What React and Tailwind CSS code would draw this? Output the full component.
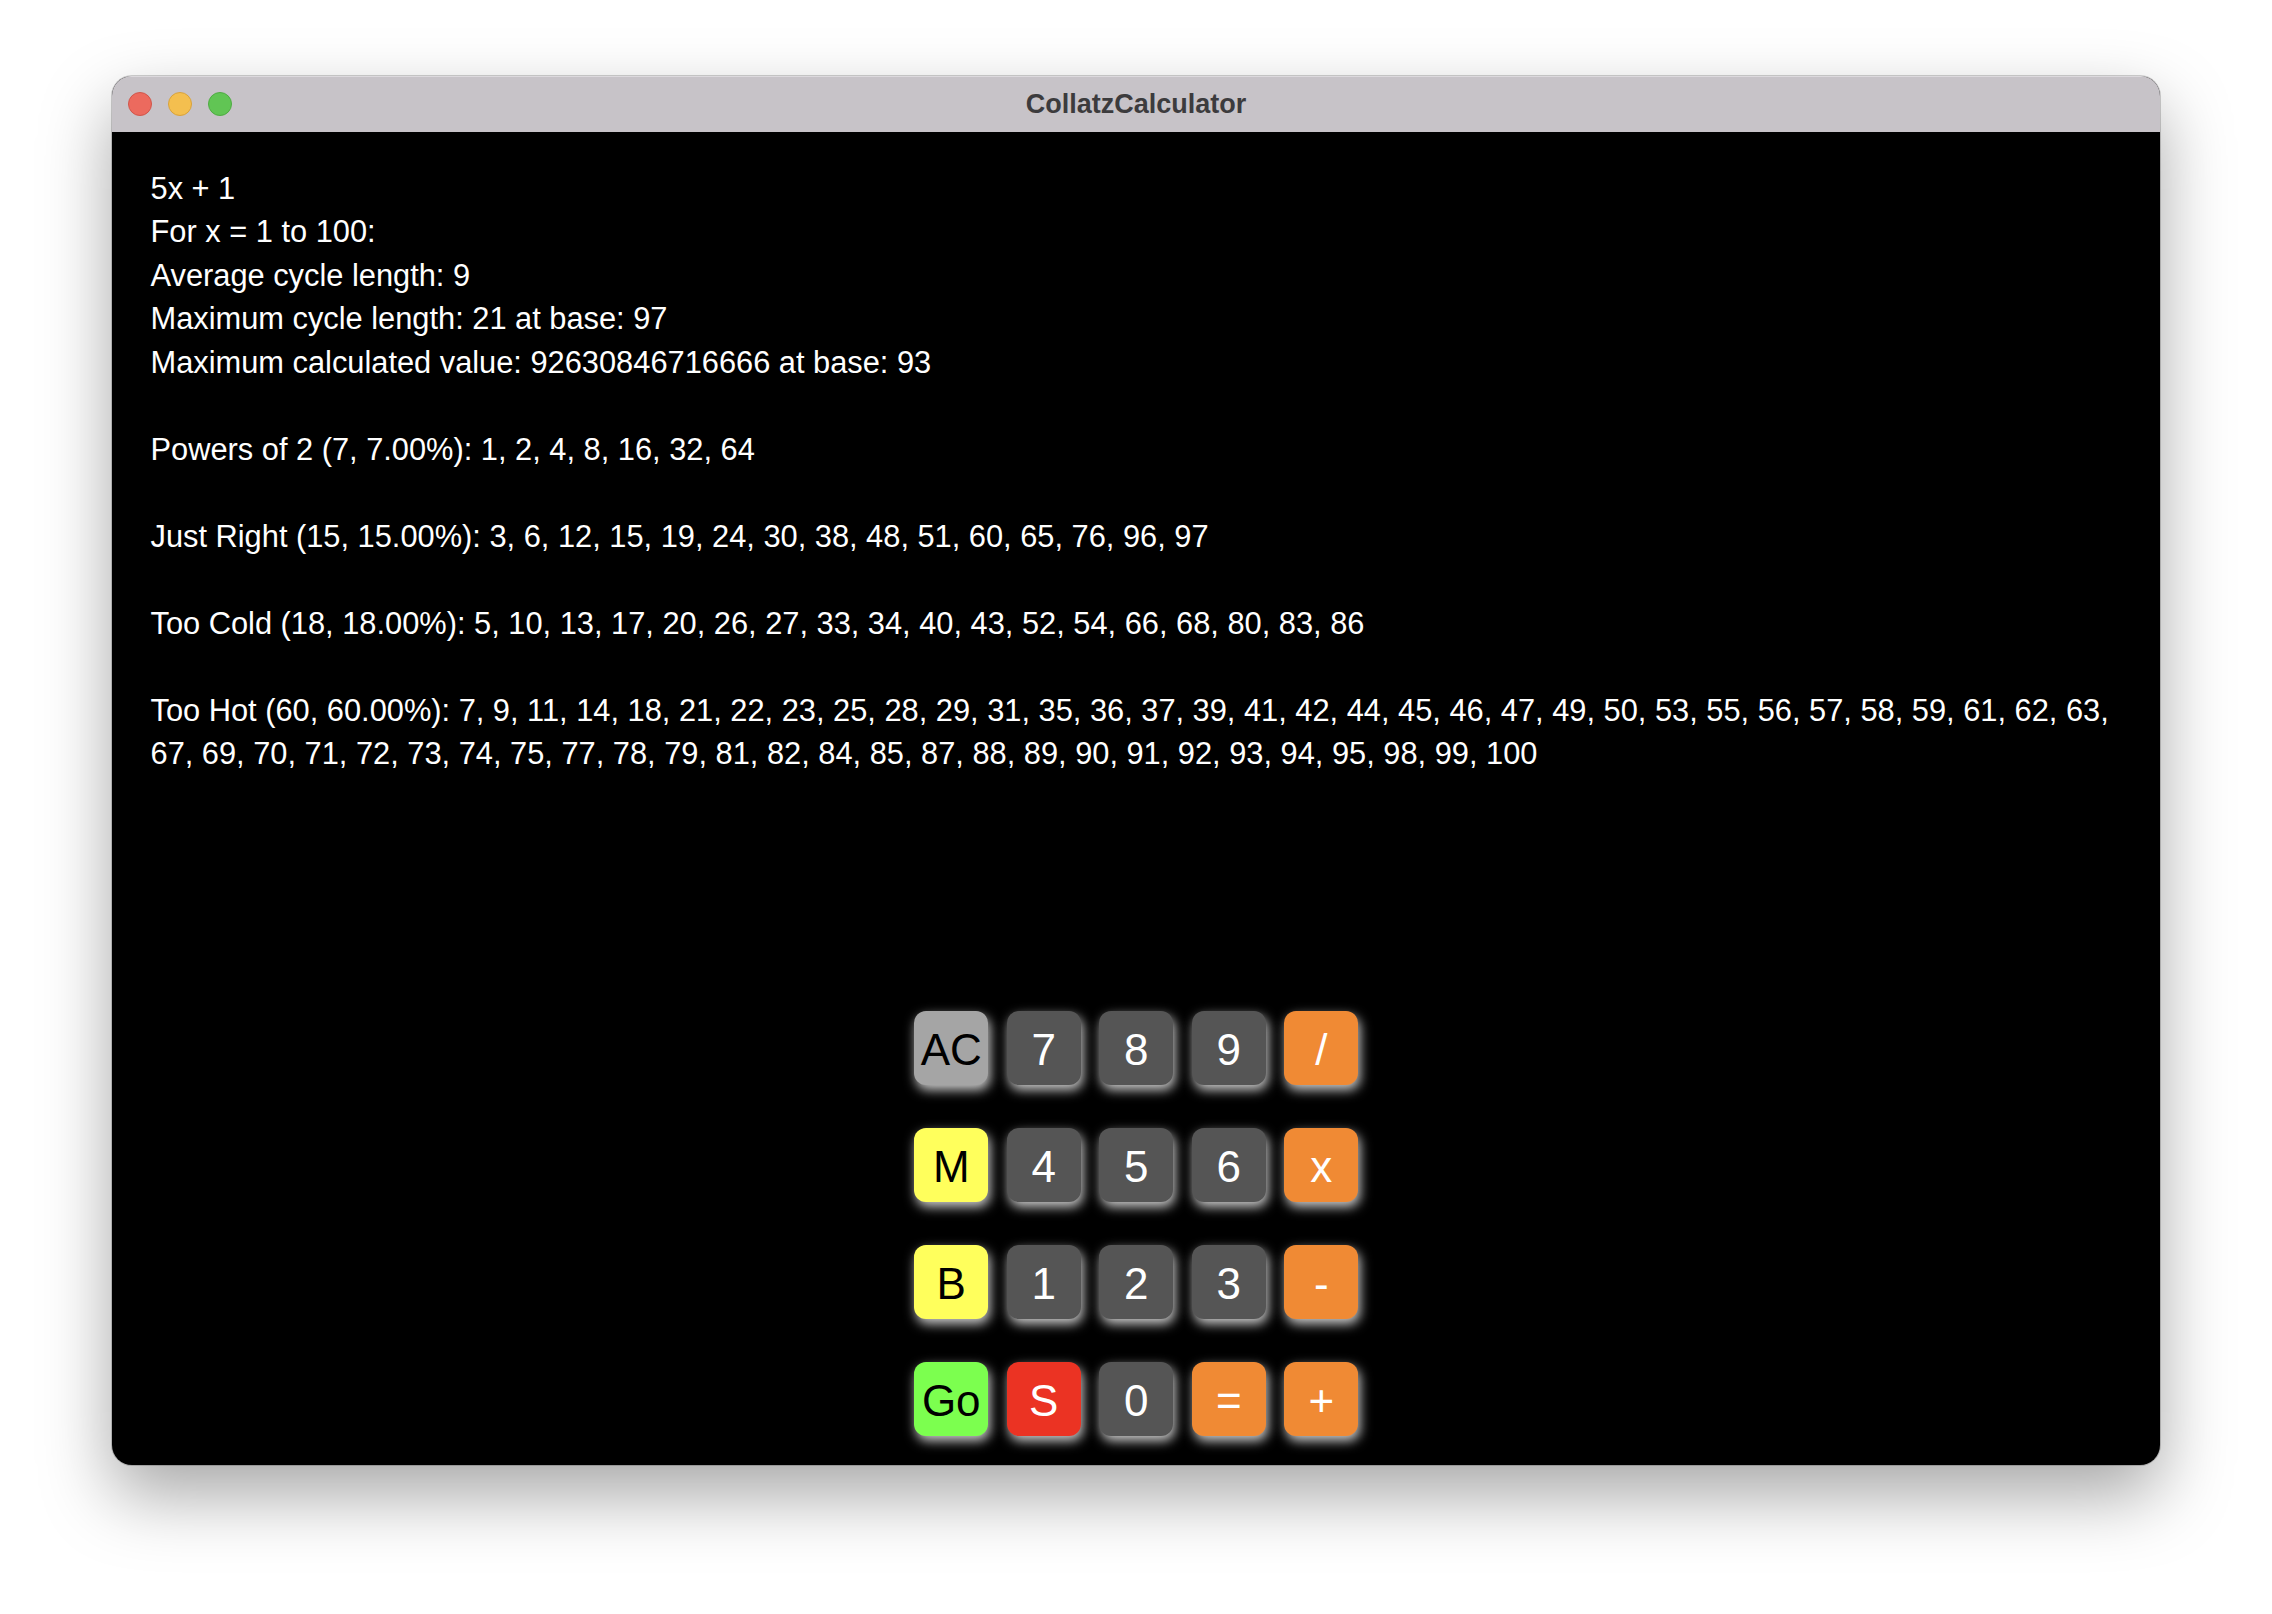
import React from "react";

const lines = [
  "5x + 1",
  "For x = 1 to 100:",
  "Average cycle length: 9",
  "Maximum cycle length: 21 at base: 97",
  "Maximum calculated value: 92630846716666 at base: 93",
  "",
  "Powers of 2 (7, 7.00%): 1, 2, 4, 8, 16, 32, 64",
  "",
  "Just Right (15, 15.00%): 3, 6, 12, 15, 19, 24, 30, 38, 48, 51, 60, 65, 76, 96, 97",
  "",
  "Too Cold (18, 18.00%): 5, 10, 13, 17, 20, 26, 27, 33, 34, 40, 43, 52, 54, 66, 68, 80, 83, 86",
  "",
  "Too Hot (60, 60.00%): 7, 9, 11, 14, 18, 21, 22, 23, 25, 28, 29, 31, 35, 36, 37, 39, 41, 42, 44, 45, 46, 47, 49, 50, 53, 55, 56, 57, 58, 59, 61, 62, 63, 67, 69, 70, 71, 72, 73, 74, 75, 77, 78, 79, 81, 82, 84, 85, 87, 88, 89, 90, 91, 92, 93, 94, 95, 98, 99, 100",
];

const gray = "bg-[#555555] text-white";
const orange = "bg-[#f08a34] text-white";

const keys = [
  { label: "AC", cls: "bg-[#a5a5a5] text-black" },
  { label: "7", cls: gray },
  { label: "8", cls: gray },
  { label: "9", cls: gray },
  { label: "/", cls: orange },
  { label: "M", cls: "bg-[#ffff5c] text-black" },
  { label: "4", cls: gray },
  { label: "5", cls: gray },
  { label: "6", cls: gray },
  { label: "x", cls: orange },
  { label: "B", cls: "bg-[#ffff5c] text-black" },
  { label: "1", cls: gray },
  { label: "2", cls: gray },
  { label: "3", cls: gray },
  { label: "-", cls: orange },
  { label: "Go", cls: "bg-[#7cff4f] text-black" },
  { label: "S", cls: "bg-[#eb3323] text-white" },
  { label: "0", cls: gray },
  { label: "=", cls: orange },
  { label: "+", cls: orange },
];

function Key({ label, cls }) {
  return (
    <button
      className={`w-[74px] h-[74px] rounded-[12px] flex items-center justify-center pt-[3px] text-[44px] leading-none shadow-[2px_5px_12px_rgba(255,255,255,0.8)] ${cls}`}
    >
      {label}
    </button>
  );
}

export default function App() {
  return (
    <div
      className="w-[2272px] h-[1614px] bg-white pt-[76px]"
      style={{ fontFamily: '"Liberation Sans", Arial, sans-serif' }}
    >
      <div className="mx-auto w-[2048px] h-[1389px] rounded-[20px] overflow-hidden flex flex-col bg-black shadow-[0_30px_70px_rgba(0,0,0,0.35),0_0_0_1px_rgba(0,0,0,0.18)]">
        <div className="relative h-[56px] shrink-0 bg-[#c7c3c8] border-t border-[#dcd9dd] flex items-center justify-center">
          <div className="absolute left-[16px] top-[15px] flex gap-[16px]">
            <span className="w-[24px] h-[24px] rounded-full bg-[#ec6a5e] border border-[#d0564b]" />
            <span className="w-[24px] h-[24px] rounded-full bg-[#f4bf4f] border border-[#d8a23c]" />
            <span className="w-[24px] h-[24px] rounded-full bg-[#61c554] border border-[#4fab43]" />
          </div>
          <span className="text-[27px] font-bold text-[#3c3b3d]">CollatzCalculator</span>
        </div>
        <div className="flex-1 flex flex-col justify-between pt-[34.5px] pb-[29px] pl-[38.5px] pr-[28px]">
          <div className="text-white text-[30.8px] leading-[43.5px]">
            {lines.map((l, i) => (
              <p key={i} className="min-h-[43.5px]">{l}</p>
            ))}
          </div>
          <div className="mx-auto grid grid-cols-5 gap-x-[18.5px] gap-y-[43px] translate-x-[-5px]">
            {keys.map((k) => (
              <Key key={k.label} {...k} />
            ))}
          </div>
        </div>
      </div>
    </div>
  );
}
